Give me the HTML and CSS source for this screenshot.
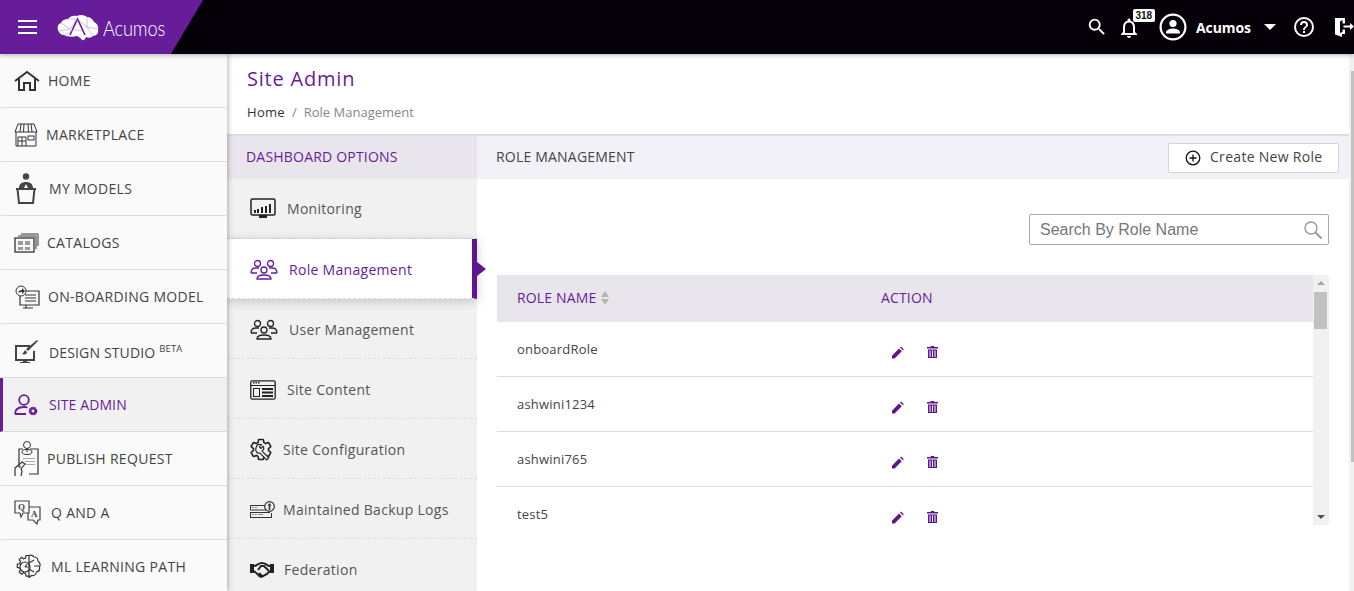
FILE: index.html
```html
<!DOCTYPE html>
<html lang="en">
<head>
    <meta charset="UTF-8">
    <meta name="viewport" content="width=device-width, initial-scale=1.0">
    <title>Acumos - Role Management</title>
    <link rel="stylesheet" href="styles.css">
</head>
<body>
    <!-- Top bar -->
    <header class="topbar">
        <div class="brand">
            <div class="burger"><span></span><span></span><span></span></div>
            <svg class="brain" width="42" height="27" viewBox="0 0 42 27">
                <path fill="#fff" d="M1 16C0 13 1 10 4 9 5 6 8 5 11 5 13 2 17 1 20 2 23 0 28 1 30 3 33 3 36 5 37 8 40 9 42 13 41 16 42 19 39 22 36 22 34 24 31 24 29 23 28 25 27 27 25 26 24 24 22 23 20 22 16 23 10 23 7 21 4 21 2 19 1 16Z"/>
                <path fill="none" stroke="#671c9a" stroke-width="1.600" d="M13 21 20.500 5 28 21"/>
                <path fill="none" stroke="#b391cc" stroke-width=".6" d="M16 16H25M4 9 13 15 20 5 30 13 30 3M2 17 13 15M30 13 41 15M11 5 20 5M30 13 36 22M8 21 16 16"/>
            </svg>
            <span class="brand-name">Acumos</span>
        </div>
        <div class="top-actions">
            <svg class="top-search" width="22" height="22" viewBox="0 0 24 24"><path fill="#fff" d="M15.500 14h-.79l-.28-.27A6.470 6.470 0 0 0 16 9.500 6.500 6.500 0 1 0 9.500 16c1.610 0 3.090-.59 4.230-1.570l.27.28v.79l5 4.990L20.490 19l-4.990-5zm-6 0C7.010 14 5 11.990 5 9.500S7.010 5 9.500 5 14 7.010 14 9.500 11.990 14 9.500 14z"/></svg>
            <div class="bell">
                <svg width="24" height="24" viewBox="0 0 24 24"><path fill="#fff" d="M12 22c1.100 0 2-.9 2-2h-4c0 1.100.9 2 2 2Zm6-6v-5c0-3.100-1.600-5.600-4.500-6.300V4a1.500 1.500 0 0 0-3 0v.7C7.600 5.400 6 7.900 6 11v5l-2 2v1h16v-1l-2-2Zm-2 1H8v-6c0-2.500 1.500-4.500 4-4.500s4 2 4 4.500v6Z"/></svg>
                <span class="badge">318</span>
            </div>
            <svg class="avatar" width="28" height="28" viewBox="0 0 28 28">
                <circle cx="14" cy="14" r="12.400" fill="none" stroke="#fff" stroke-width="2.200"/>
                <circle cx="14" cy="10.500" r="3.600" fill="#fff"/>
                <path fill="#fff" d="M7 19.500c0-2.800 4.500-4 7-4s7 1.200 7 4v1H7Z"/>
            </svg>
            <span class="user-name">Acumos</span>
            <span class="caret"></span>
            <svg class="help" width="24" height="24" viewBox="0 0 24 24"><path fill="#fff" d="M12 2a10 10 0 1 0 0 20 10 10 0 0 0 0-20Zm0 18a8 8 0 1 1 0-16 8 8 0 0 1 0 16Zm-1-4h2v2h-2v-2Zm1-10a4 4 0 0 0-4 4h2a2 2 0 1 1 4 0c0 2-3 1.800-3 5h2c0-2.300 3-2.500 3-5a4 4 0 0 0-4-4Z"/></svg>
            <svg class="logout" width="21" height="21" viewBox="0 0 21 21">
                <path fill="#fff" d="M1 1h10v5.500H8.500V3L6 4.500V16l2.500-1v-2.500H11V17H8v3L1 17.500Z"/>
                <path fill="#fff" d="M9.500 8.500H16V6l4 3.500-4 3.500v-2.500H9.500Z"/>
            </svg>
        </div>
    </header>

    <div class="page">
        <!-- Main navigation -->
        <nav class="sidenav">
            <a class="nav-item">
                <svg class="nav-icon" width="26" height="22" viewBox="0 0 26 22"><path fill="none" stroke="#333" stroke-width="2" d="M1 11 13 2l12 9M5 9v11h5v-7h6v7h5V9"/></svg>
                <span class="t-home">HOME</span>
            </a>
            <a class="nav-item">
                <svg class="nav-icon" width="24" height="24" viewBox="0 0 24 24"><g fill="none" stroke="#333"><path d="M4 1h16l3 8H1ZM2 9v14h20V9M7 1 6 9M10 1l-.500 8M14 1l.500 8M17 1l1 8M4 14h8v9M8 14v9M4 14v9M4 18h8"/><rect x="14" y="13" width="6" height="4"/></g></svg>
                <span class="t-market">MARKETPLACE</span>
            </a>
            <a class="nav-item">
                <svg class="nav-icon" width="24" height="32" viewBox="0 0 24 32"><circle cx="12" cy="3.500" r="3.200" fill="#444"/><path fill="#444" d="M5 15c0-4 3-6 7-6s7 2 7 6h-5l-2-4-2 4Z"/><path fill="none" stroke="#444" stroke-width="2" d="M2 16h20M3.500 16 5 30h14l1.500-14"/></svg>
                <span class="t-models">MY MODELS</span>
            </a>
            <a class="nav-item">
                <svg class="nav-icon" width="25" height="20" viewBox="0 0 25 20"><g fill="none" stroke="#333"><rect x="1" y="5" width="19" height="14" stroke-width="1.300"/><path d="M4 3h18v13M7 1h17v12"/></g><path fill="#999" d="M4 8h5v4H4zm7 0h5v4h-5zM4 14h5v3H4zm7 0h5v3h-5z"/></svg>
                <span class="t-catalogs">CATALOGS</span>
            </a>
            <a class="nav-item">
                <svg class="nav-icon" width="26" height="24" viewBox="0 0 26 24"><g fill="none" stroke="#333"><circle cx="7" cy="6" r="5"/><path stroke-width="1.200" d="M12 6h13v14H6v-9M12 20v3h4M9 23h10"/><path d="M11 10h11M11 13h11M11 16h11"/></g><path fill="#333" d="M4 8c.5-2 2-3 4-3V3l3 3-3 3V7c-2 0-3 0-4 1Z"/></svg>
                <span class="t-onboard">ON-BOARDING MODEL</span>
            </a>
            <a class="nav-item nav-design">
                <svg class="nav-icon" width="24" height="24" viewBox="0 0 24 24"><path fill="none" stroke="#444" stroke-width="2" d="M16 6H2v14h18v-9"/><path fill="#444" d="M9 20h4v2h3v1H6v-1h3ZM23 0l1 1-10 10-2-2ZM11 10l2 2c0 2-2 3-5 2 2-1 2-3 3-4Z"/></svg>
                <span class="t-design">DESIGN STUDIO <sup class="beta">BETA</sup></span>
            </a>
            <a class="nav-item nav-active">
                <svg class="nav-icon" width="24" height="22" viewBox="0 0 24 22"><g fill="none" stroke="#671c9a" stroke-width="1.800"><circle cx="10" cy="6" r="4.800"/><path d="M1 20c0-5 4-7 9-7 1.500 0 2.500.2 3.500.5M1 20h11"/></g><circle cx="19" cy="17" r="3" fill="none" stroke="#671c9a" stroke-width="2.600" stroke-dasharray="1.800 .6"/><circle cx="19" cy="17" r="2.600" fill="none" stroke="#671c9a" stroke-width="1.800"/></svg>
                <span class="t-admin">SITE ADMIN</span>
            </a>
            <a class="nav-item">
                <svg class="nav-icon" width="25" height="36" viewBox="0 0 25 36"><g fill="none" stroke="#333"><path stroke-width="1.200" d="M9 8H5v18h2M16 8h8v25h-9"/><circle cx="13" cy="4" r="3.500"/><ellipse cx="13" cy="11" rx="5" ry="2.500"/><path d="M13 7v4"/><path stroke-width="1.200" d="M1 35v-8l7-6 3 2-4 5 1 2-1 5"/></g><path fill="#aaa" d="M9 17h12v1H9zm2 3h10v1H11zm1 3h9v1h-9z"/></svg>
                <span class="t-publish">PUBLISH REQUEST</span>
            </a>
            <a class="nav-item">
                <svg class="nav-icon" width="27" height="25" viewBox="0 0 27 25"><g fill="none" stroke="#444"><path stroke-width="1.200" d="M1 1h14v12H9l-2 4-1-4H1Z"/><path stroke-width="1.200" d="M15 7h11v13h-2l-1 4-4-4h-5v-7"/></g><text class="icon-letter" x="4" y="10">Q</text><text class="icon-letter" x="17" y="17">A</text></svg>
                <span class="t-qa">Q AND A</span>
            </a>
            <a class="nav-item">
                <svg class="nav-icon" width="28" height="26" viewBox="0 0 28 26"><g fill="none" stroke="#333" stroke-width="1.200"><path d="M15 1.500h-3l-.5 2.500-2 .8-2-1.400-2.300 2.300 1.400 2-.8 2-2.500.5v3.200l2.500.5.8 2-1.400 2 2.300 2.300 2-1.400 2 .8.500 2.500h3"/><path d="M15 1.500c2-.8 4 0 5 1.500 2.500 0 4 2 4 4 2 1.500 2.500 4 1.500 6 .5 2.500-1 4.500-3 5-.5 2.500-2.500 4-5 3.500l-2.500 2"/><circle cx="11" cy="13" r="5"/><path d="M15 2v22M15 9l5-3M15 15l5 3M20 12h5M11 13l2-3M11 13h3"/></g></svg>
                <span class="t-learn">ML LEARNING PATH</span>
            </a>
        </nav>

        <main class="content">
            <section class="title-block">
                <h1 class="page-title">Site Admin</h1>
                <p class="crumbs"><span class="crumb-home">Home</span><span class="crumb-sep">/</span>Role Management</p>
            </section>

            <div class="panels">
                <!-- Dashboard options -->
                <aside class="options">
                    <h2 class="options-head">DASHBOARD OPTIONS</h2>
                    <a class="opt">
                        <svg class="opt-icon" width="26" height="22" viewBox="0 0 26 22"><rect x="1" y="1" width="24" height="16" rx="1.500" fill="none" stroke="#222" stroke-width="1.500"/><path fill="#222" d="M9 17h8v3H9zM4 12h2v3H4zm3-1h2v4H7zm4-2h2v6h-2zm4-1h2v7h-2zm4-2h2v9h-2z"/></svg>
                        <span class="l-mon">Monitoring</span>
                    </a>
                    <a class="opt opt-active">
                        <svg class="opt-icon" width="28" height="21" viewBox="0 0 28 21"><g fill="none" stroke="#671c9a" stroke-width="1.300"><circle cx="7.500" cy="4.500" r="3"/><circle cx="20.500" cy="4.500" r="3"/><circle cx="14" cy="11" r="3"/><path d="M1 14c0-4 3-5 5-5h3M27 14c0-4-3-5-5-5h-3M1 14h6M27 14h-6M7 20c0-3 3-4 7-4s7 1 7 4Z"/></g></svg>
                        <span class="l-role">Role Management</span>
                    </a>
                    <a class="opt">
                        <svg class="opt-icon" width="28" height="21" viewBox="0 0 28 21"><g fill="none" stroke="#222" stroke-width="1.300"><circle cx="7.500" cy="4.500" r="3"/><circle cx="20.500" cy="4.500" r="3"/><circle cx="14" cy="11" r="3"/><path d="M1 14c0-4 3-5 5-5h3M27 14c0-4-3-5-5-5h-3M1 14h6M27 14h-6M7 20c0-3 3-4 7-4s7 1 7 4Z"/></g></svg>
                        <span class="l-user">User Management</span>
                    </a>
                    <a class="opt">
                        <svg class="opt-icon" width="26" height="20" viewBox="0 0 26 20"><rect x=".800" y=".800" width="24.400" height="18.400" rx="1.500" fill="none" stroke="#222" stroke-width="1.300"/><path stroke="#222" d="M1 5.500h24"/><path fill="#222" d="M3 2h1.500v1.500H3zm2.500 0H7v1.500H5.500zM8 2h1.500v1.500H8zM12 8h11v2H12zm0 3.500h11v2H12zm0 3.500h11v2H12z"/><rect x="3.500" y="8.500" width="6" height="8" fill="none" stroke="#222"/></svg>
                        <span class="l-content">Site Content</span>
                    </a>
                    <a class="opt">
                        <svg class="opt-icon" width="23" height="23" viewBox="2 1 21 22"><path fill="none" stroke="#222" stroke-width="1.500" d="M19.140 12.940c.04-.3.06-.61.06-.94 0-.32-.02-.64-.07-.94l2.030-1.580a.49.49 0 0 0 .12-.61l-1.920-3.320a.488.488 0 0 0-.59-.22l-2.390.96c-.5-.38-1.030-.7-1.620-.94l-.36-2.540a.484.484 0 0 0-.48-.41h-3.840c-.24 0-.43.17-.47.41l-.36 2.540c-.59.24-1.130.57-1.620.94l-2.390-.96c-.22-.08-.47 0-.59.22L2.740 8.870c-.12.21-.08.47.12.61l2.030 1.580c-.05.3-.09.63-.09.94s.02.64.07.94l-2.030 1.580a.49.49 0 0 0-.12.61l1.920 3.320c.12.22.37.29.59.22l2.390-.96c.5.38 1.030.7 1.620.94l.36 2.540c.05.24.24.41.48.41h3.840c.24 0 .44-.17.47-.41l.36-2.540c.59-.24 1.130-.56 1.620-.94l2.390.96c.22.08.47 0 .59-.22l1.920-3.320c.12-.22.07-.47-.12-.61l-2.010-1.580z"/><path fill="#f1f1f1" stroke="#222" stroke-width="1.100" d="M8 8.500c1-1.500 3-2 4.500-1l-2 2 1.500 1.500 2-2c1 1.500.5 3.500-1 4.500l6.500 6.500-2 2L11 15.500c-2 .5-4-1-4-3.500 0-1.500.5-2.500 1-3.500Z"/></svg>
                        <span class="l-config">Site Configuration</span>
                    </a>
                    <a class="opt">
                        <svg class="opt-icon" width="25" height="17" viewBox="0 0 25 17"><path fill="#333" d="M0 4h16v1H0zm0 4.500h16v1H0zM0 11h20v1H0zm0 5h22v1H0z"/><path fill="none" stroke="#333" d="M.500 5v3.500M.500 12v4M21.500 12v4"/><path fill="#888" d="M2 6h2v1H2zm3 0h2v1H5zM2 13h2v1H2zm3 0h2v1H5zm3 0h5v1H8z"/><circle cx="19.500" cy="5.500" r="4.800" fill="#f0f0f0" stroke="#333" stroke-width="1.200"/><path fill="#333" d="m19.500 2 2 2.500H20.300V9h-1.600V4.500h-1.200Z"/></svg>
                        <span class="l-backup">Maintained Backup Logs</span>
                    </a>
                    <a class="opt">
                        <svg class="opt-icon" width="24" height="16" viewBox="0 0 24 16"><path fill="#222" d="M0 2h4v9H0zm20 0h4v9h-4z"/><path fill="none" stroke="#222" stroke-width="2" d="M4 4c3 0 4-3 8-3s5 3 8 3M4 9l6 5.500c2 .5 3-.5 3-.5l4-2 3-3M8 8l3-4h3l5 5M12 14l-3-3"/></svg>
                        <span class="l-fed">Federation</span>
                    </a>
                </aside>

                <section class="roles">
                    <div class="roles-head">
                        <h2 class="roles-title">ROLE MANAGEMENT</h2>
                        <button class="btn-create">
                            <svg width="16" height="16" viewBox="0 0 16 16"><circle cx="8" cy="8" r="6.800" fill="none" stroke="#111" stroke-width="1.300"/><path stroke="#111" stroke-width="1.300" d="M8 4.500v7M4.500 8h7"/></svg>
                            Create New Role
                        </button>
                    </div>

                    <div class="roles-body">
                        <div class="search-box">
                            <span class="search-text">Search By Role Name</span>
                            <svg width="20" height="20" viewBox="0 0 20 20"><circle cx="8" cy="8" r="6" fill="none" stroke="#999" stroke-width="1.400"/><path stroke="#999" stroke-width="2" d="m12.500 12.500 6 6"/></svg>
                        </div>

                        <div class="table-wrap">
                            <div class="table-scroll">
                                <div class="row row-head">
                                    <div class="col-name">ROLE NAME <span class="sort"><i class="sort-up"></i><i class="sort-down"></i></span></div>
                                    <div class="col-action">ACTION</div>
                                </div>
                                <div class="row">
                                    <div class="col-name">onboardRole</div>
                                    <div class="col-action icons">
                                        <svg width="13" height="13" viewBox="0 0 13 13"><path fill="#5f1590" d="M1 12.500v-2.800L8 2.500l2.800 2.800-7.200 7.200ZM9 1.500l1-1 2.800 2.800-1 1Z"/></svg>
                                        <svg width="11" height="12" viewBox="0 0 11 12"><path fill="#5f1590" d="M0 1h3.500l.5-1h3l.5 1H11v1.500H0ZM1 3.500h9V12H1Zm1.500 1V11h1V4.500Zm2.500 0V11h1V4.500Zm2.500 0V11h1V4.500Z"/></svg>
                                    </div>
                                </div>
                                <div class="row">
                                    <div class="col-name">ashwini1234</div>
                                    <div class="col-action icons">
                                        <svg width="13" height="13" viewBox="0 0 13 13"><path fill="#5f1590" d="M1 12.500v-2.800L8 2.500l2.800 2.800-7.200 7.200ZM9 1.500l1-1 2.800 2.800-1 1Z"/></svg>
                                        <svg width="11" height="12" viewBox="0 0 11 12"><path fill="#5f1590" d="M0 1h3.500l.5-1h3l.5 1H11v1.500H0ZM1 3.500h9V12H1Zm1.500 1V11h1V4.500Zm2.500 0V11h1V4.500Zm2.500 0V11h1V4.500Z"/></svg>
                                    </div>
                                </div>
                                <div class="row">
                                    <div class="col-name">ashwini765</div>
                                    <div class="col-action icons">
                                        <svg width="13" height="13" viewBox="0 0 13 13"><path fill="#5f1590" d="M1 12.500v-2.800L8 2.500l2.800 2.800-7.200 7.200ZM9 1.500l1-1 2.800 2.800-1 1Z"/></svg>
                                        <svg width="11" height="12" viewBox="0 0 11 12"><path fill="#5f1590" d="M0 1h3.500l.5-1h3l.5 1H11v1.500H0ZM1 3.500h9V12H1Zm1.500 1V11h1V4.500Zm2.500 0V11h1V4.500Zm2.500 0V11h1V4.500Z"/></svg>
                                    </div>
                                </div>
                                <div class="row">
                                    <div class="col-name">test5</div>
                                    <div class="col-action icons">
                                        <svg width="13" height="13" viewBox="0 0 13 13"><path fill="#5f1590" d="M1 12.500v-2.800L8 2.500l2.800 2.800-7.200 7.200ZM9 1.500l1-1 2.800 2.800-1 1Z"/></svg>
                                        <svg width="11" height="12" viewBox="0 0 11 12"><path fill="#5f1590" d="M0 1h3.500l.5-1h3l.5 1H11v1.500H0ZM1 3.500h9V12H1Zm1.500 1V11h1V4.500Zm2.500 0V11h1V4.500Zm2.500 0V11h1V4.500Z"/></svg>
                                    </div>
                                </div>
                            </div>
                            <div class="fake-scroll">
                                <span class="arrow-up"></span>
                                <span class="thumb"></span>
                                <span class="arrow-down"></span>
                            </div>
                        </div>
                    </div>
                </section>
            </div>
        </main>
        <div class="page-scroll"></div>
    </div>
</body>
</html>
```

FILE: styles.css
```css
* {
    box-sizing: border-box;
}

html, body {
    margin: 0;
    height: 591px;
    overflow: hidden;
}

body {
    font-family: "Open Sans", sans-serif;
    font-size: 14px;
    color: #444;
    background-color: #fff;
}

/* top bar */
.topbar {
    height: 54px;
    background-color: #050008;
    display: flex;
    justify-content: space-between;
    align-items: center;
    position: relative;
    z-index: 3;
    box-shadow: 0 1px 5px rgba(0, 0, 0, 0.3);
}

.brand {
    width: 203px;
    height: 54px;
    background-color: #671c9a;
    clip-path: polygon(0 0, 100% 0, 171px 100%, 0 100%);
    display: flex;
    align-items: center;
    padding-left: 18px;
}

.burger {
    width: 19px;
}

.burger span {
    display: block;
    height: 2px;
    background-color: #fff;
    margin: 4px 0;
}

.brain {
    margin-left: 20px;
}

.brand-name {
    color: #fff;
    font-family: "Lato", sans-serif;
    font-weight: 300;
    font-size: 21px;
    margin-left: 4px;
    letter-spacing: -0.2px;
    transform: scaleX(0.87);
    transform-origin: left center;
}

.top-actions {
    display: flex;
    align-items: center;
    color: #fff;
}

.top-search {
    margin-right: 9px;
}

.bell {
    position: relative;
    width: 24px;
    height: 24px;
    margin-top: 2px;
    margin-right: 18px;
}

.badge {
    position: absolute;
    left: 16px;
    top: -7px;
    background-color: #fff;
    color: #111;
    font-family: "Liberation Sans", sans-serif;
    font-weight: 700;
    font-size: 10px;
    line-height: 13px;
    padding: 0 2.500px;
    border-radius: 2px;
}

.avatar {
    margin-right: 9px;
}

.user-name {
    font-weight: 700;
    font-size: 14px;
    letter-spacing: -0.1px;
    width: 55px;
}

.caret {
    width: 0;
    height: 0;
    border-left: 6px solid transparent;
    border-right: 6px solid transparent;
    border-top: 6px solid #fff;
    margin-left: 13px;
    margin-right: 16px;
}

.help {
    margin-right: 18px;
}

.logout {
    margin-right: -1px;
}

.page {
    display: flex;
    height: 537px;
}

/* left navigation */
.sidenav {
    width: 227px;
    flex: none;
    background-color: #fafafa;
    box-shadow: 1px 0 5px rgba(0, 0, 0, 0.3);
    position: relative;
    z-index: 2;
    overflow: hidden;
}

.nav-item {
    display: flex;
    align-items: center;
    height: 54px;
    padding-left: 13px;
    border-bottom: 1px solid #dcdcdc;
    font-size: 14px;
    letter-spacing: 0.3px;
    color: #444;
    margin-left: 1px;
}

.nav-active {
    background-color: #f1f1f1;
    color: #671c9a;
    font-weight: 500;
    border-left: 3px solid #671c9a;
    margin-left: 0;
    padding-left: 11px;
}

.nav-design {
    padding-top: 3px;
}

.nav-icon {
    flex: none;
}

.t-home { margin-left: 8px; }
.t-market { margin-left: 8px; }
.t-models { margin-left: 11px; }
.t-catalogs { margin-left: 8px; }
.t-onboard { margin-left: 8px; }
.t-design { margin-left: 11px; letter-spacing: 0.15px; }
.t-admin { margin-left: 11px; letter-spacing: 0.1px; }
.t-publish { margin-left: 8px; }
.t-qa { margin-left: 10px; }
.t-learn { margin-left: 9px; }

.beta {
    font-size: 9.500px;
    line-height: 0;
}

.icon-letter {
    font-family: "Liberation Serif", serif;
    font-weight: 700;
    font-size: 9px;
    fill: #444;
}

/* content */
.content {
    flex: 1;
    min-width: 0;
    display: flex;
    flex-direction: column;
}

.title-block {
    height: 82px;
    border-bottom: 2px solid #dedede;
    padding: 12px 0 0 20px;
}

.page-title {
    margin: 0;
    font-size: 20px;
    line-height: 26px;
    font-weight: 500;
    letter-spacing: 0.8px;
    color: #671c9a;
}

.crumbs {
    margin: 11px 0 0;
    font-size: 13px;
    line-height: 18px;
    color: #888;
}

.crumb-home {
    color: #333;
    letter-spacing: 0.3px;
}

.crumb-sep {
    margin: 0 7px;
}

.panels {
    display: flex;
    flex: 1;
    min-height: 0;
}

.options {
    width: 250px;
    flex: none;
    background-color: #f1f1f1;
    position: relative;
}

.options-head {
    margin: 0;
    height: 43px;
    line-height: 41px;
    padding-left: 19px;
    background-color: #e8e6ec;
    font-size: 14px;
    font-weight: 500;
    letter-spacing: 0.2px;
    color: #671c9a;
}

.opt {
    display: flex;
    align-items: center;
    height: 60px;
    padding-left: 23px;
    border-bottom: 1px dashed #ddd;
    font-size: 14px;
    font-weight: 500;
    letter-spacing: 0.3px;
    color: #555;
}

.opt + .opt {
    padding-top: 2px;
}

.opt-active {
    background-color: #fff;
    color: #671c9a;
    border-right: 5px solid #5f1590;
    position: relative;
    box-shadow: 0 2px 10px rgba(0, 0, 0, 0.2);
}

.opt-active::after {
    content: "";
    position: absolute;
    right: -14px;
    top: 23px;
    border-left: 9px solid #5f1590;
    border-top: 7px solid transparent;
    border-bottom: 7px solid transparent;
}

.opt-icon {
    flex: none;
}

.l-mon { margin-left: 11px; }
.l-role { margin-left: 11px; }
.l-user { margin-left: 11px; }
.l-content { margin-left: 11px; }
.l-config { margin-left: 10px; }
.l-backup { margin-left: 8px; }
.l-fed { margin-left: 10px; }

.roles {
    flex: 1;
    min-width: 0;
}

.roles-head {
    height: 43px;
    background-color: #f3f1f8;
    display: flex;
    align-items: center;
    justify-content: space-between;
    padding: 0 10px 0 19px;
}

.roles-title {
    margin: 0 0 2px;
    font-size: 14px;
    font-weight: 500;
    letter-spacing: 0.2px;
    color: #444;
}

.btn-create {
    display: flex;
    align-items: center;
    gap: 9px;
    width: 171px;
    height: 30px;
    padding: 0 0 3px 16px;
    background-color: #fff;
    border: 1px solid #d4d4d4;
    border-radius: 2px;
    font-family: "Open Sans", sans-serif;
    font-size: 14px;
    font-weight: 500;
    letter-spacing: 0.3px;
    color: #444;
}

.btn-create svg {
    margin-top: 3px;
}

.roles-body {
    padding: 35px 20px 0;
}

.search-box {
    width: 300px;
    height: 31px;
    margin-left: auto;
    border: 1px solid #aaa;
    border-radius: 2px;
    display: flex;
    align-items: center;
    justify-content: space-between;
    padding: 0 5px 0 10px;
}

.search-text {
    font-family: "Liberation Sans", sans-serif;
    font-size: 16px;
    color: #777;
}

.table-wrap {
    display: flex;
    margin-top: 30px;
    height: 250px;
}

.table-scroll {
    flex: 1;
    min-width: 0;
    overflow: hidden;
}

.row {
    display: flex;
    height: 55px;
    padding-top: 18px;
    border-bottom: 1px solid #dcdcdc;
    font-size: 13px;
    letter-spacing: 0.2px;
    line-height: 18px;
    color: #444;
}

.row-head {
    height: 47px;
    padding-top: 14px;
    border-bottom: 0;
    background-color: #e8e6ec;
    font-size: 14px;
    font-weight: 500;
    letter-spacing: 0.15px;
    color: #671c9a;
}

.col-name {
    width: 384px;
    padding-left: 20px;
}

.col-action {
    flex: 1;
}

.icons {
    display: flex;
    align-items: flex-start;
    gap: 23px;
    padding: 6px 0 0 10px;
}

.sort {
    display: inline-block;
    vertical-align: -2px;
    margin-left: 1px;
}

.sort i {
    display: block;
    width: 0;
    height: 0;
    border-left: 4.500px solid transparent;
    border-right: 4.500px solid transparent;
}

.sort-up {
    border-bottom: 6px solid #b5b5b5;
    margin-bottom: 2px;
}

.sort-down {
    border-top: 6px solid #b5b5b5;
}

.fake-scroll {
    width: 16px;
    flex: none;
    background-color: #f1f1f1;
    position: relative;
    height: 250px;
}

.arrow-up, .arrow-down {
    position: absolute;
    left: 4px;
    width: 0;
    height: 0;
    border-left: 4px solid transparent;
    border-right: 4px solid transparent;
}

.arrow-up {
    top: 6px;
    border-bottom: 4px solid #a3a3a3;
}

.arrow-down {
    bottom: 6px;
    border-top: 4px solid #505050;
}

.thumb {
    position: absolute;
    left: 1px;
    top: 17px;
    width: 13px;
    height: 37px;
    background-color: #c1c1c1;
}

.page-scroll {
    width: 5px;
    flex: none;
    background-color: #f1f1f1;
    position: relative;
}

.page-scroll::after {
    content: "";
    position: absolute;
    left: 2px;
    top: 17px;
    right: 0;
    height: 391px;
    background-color: #c1c1c1;
}
```
